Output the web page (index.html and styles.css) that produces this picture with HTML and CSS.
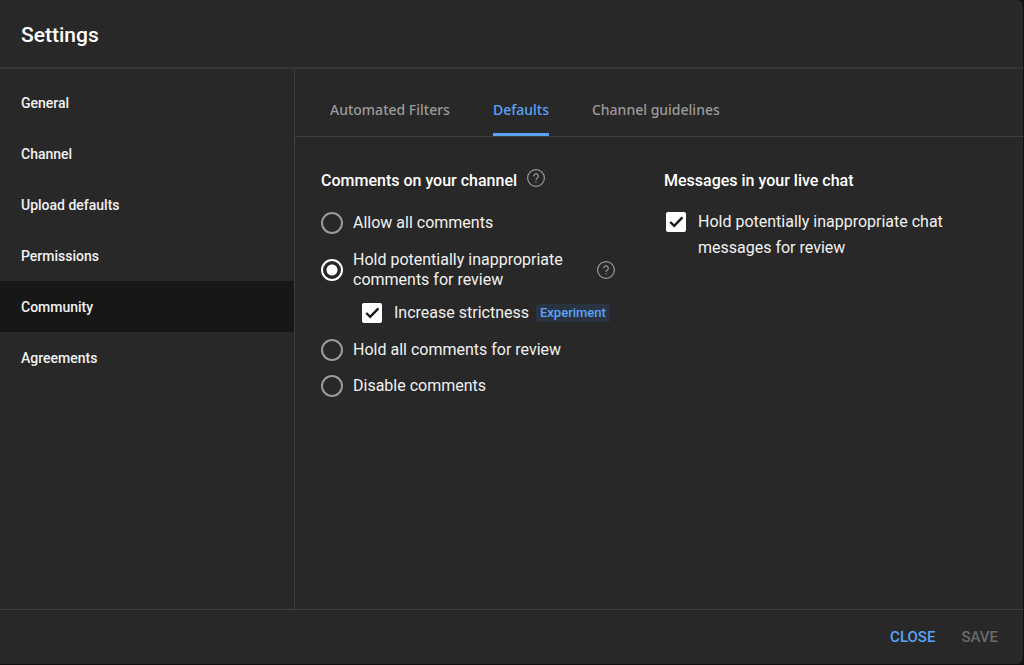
FILE: index.html
```html
<!DOCTYPE html>
<html lang="en">
<head>
<meta charset="utf-8">
<meta name="viewport" content="width=device-width, initial-scale=1">
<title>Settings</title>
<link rel="stylesheet" href="styles.css">
</head>
<body>
<div class="dialog" role="dialog" aria-labelledby="title">
  <header class="header"><h1 class="title" id="title">Settings</h1></header>
  <div class="body">
    <nav class="sidebar" aria-label="Settings sections">
      <a class="nav-item" href="#general">General</a>
      <a class="nav-item" href="#channel">Channel</a>
      <a class="nav-item" href="#uploads">Upload defaults</a>
      <a class="nav-item" href="#permissions">Permissions</a>
      <a class="nav-item nav-item-active" href="#community" aria-current="page">Community</a>
      <a class="nav-item" href="#agreements">Agreements</a>
    </nav>
    <main class="content">
      <div class="tabs" role="tablist">
        <button class="tab" type="button" role="tab" aria-selected="false">Automated Filters</button>
        <button class="tab tab-active" type="button" role="tab" aria-selected="true">Defaults</button>
        <button class="tab" type="button" role="tab" aria-selected="false">Channel guidelines</button>
      </div>
      <div class="panels">
        <section class="panel">
          <div class="heading-row">
            <h2 class="heading" id="comments">Comments on your channel</h2>
            <button class="help" type="button" aria-label="Help with comments">
              <svg class="help-icon" viewBox="0 0 18 18" aria-hidden="true"><circle cx="9" cy="9" r="8.4"/><path d="M6.7 7.2a2.3 2.3 0 1 1 3.7 1.8C9.5 9.6 9 10 9 11"/><path d="M9 12.3v1.3"/></svg>
            </button>
          </div>
          <div class="options" role="radiogroup" aria-labelledby="comments">
            <div class="option">
              <input class="radio" type="radio" name="mode" id="allow">
              <label class="option-label" for="allow">Allow all comments</label>
            </div>
            <div class="option option-tall">
              <input class="radio" type="radio" name="mode" id="hold" checked>
              <label class="option-label option-label-wrap" for="hold">Hold potentially inappropriate comments for review</label>
              <button class="help" type="button" aria-label="Help with held comments">
                <svg class="help-icon" viewBox="0 0 18 18" aria-hidden="true"><circle cx="9" cy="9" r="8.4"/><path d="M6.7 7.2a2.3 2.3 0 1 1 3.7 1.8C9.5 9.6 9 10 9 11"/><path d="M9 12.3v1.3"/></svg>
              </button>
            </div>
            <div class="option option-nested">
              <span class="check-box">
                <input class="check" type="checkbox" id="strict" checked>
                <svg class="check-mark" viewBox="0 0 20 20" aria-hidden="true"><path d="M4.2 10l4 3.8 8.2-8.4"/></svg>
              </span>
              <label class="option-label" for="strict">Increase strictness</label>
              <span class="badge">Experiment</span>
            </div>
            <div class="option">
              <input class="radio" type="radio" name="mode" id="hold-all">
              <label class="option-label" for="hold-all">Hold all comments for review</label>
            </div>
            <div class="option">
              <input class="radio" type="radio" name="mode" id="disable">
              <label class="option-label" for="disable">Disable comments</label>
            </div>
          </div>
        </section>
        <section class="panel">
          <div class="heading-row"><h2 class="heading">Messages in your live chat</h2></div>
          <div class="chat-option">
            <span class="check-box">
              <input class="check" type="checkbox" id="chat" checked>
              <svg class="check-mark" viewBox="0 0 20 20" aria-hidden="true"><path d="M4.2 10l4 3.8 8.2-8.4"/></svg>
            </span>
            <label class="chat-label" for="chat">Hold potentially inappropriate chat messages for review</label>
          </div>
        </section>
      </div>
    </main>
  </div>
  <footer class="footer">
    <button class="action" type="button">CLOSE</button>
    <button class="action" type="button" disabled>SAVE</button>
  </footer>
</div>
</body>
</html>
```
FILE: styles.css
```css
* { box-sizing: border-box; }

body {
  margin: 0;
  background: #111;
  color: #f1f1f1;
  font-family: Roboto, "Liberation Sans", sans-serif;
  font-size: 16px;
}

button {
  padding: 0;
  border: 0;
  background: none;
  font: inherit;
}

.dialog {
  display: flex;
  flex-direction: column;
  min-height: calc(100vh - 1px);
  margin: 0 1px 1px 0;
  border-radius: 0 6px 6px 0;
  background: #282828;
}

.header {
  padding: 21px 21px 18px;
  border-bottom: 2px solid #363636;
}

.title {
  margin: 0;
  color: #fff;
  font-size: 21px;
  font-weight: 500;
  line-height: 28px;
}

.body {
  display: grid;
  grid-template-columns: 295px 1fr;
  flex: 1;
}

.sidebar {
  padding-top: 8px;
  border-right: 1px solid #3f3f3f;
}

.nav-item {
  display: flex;
  align-items: center;
  height: 51px;
  padding-left: 21px;
  color: #f1f1f1;
  font-size: 14px;
  font-weight: 500;
  text-decoration: none;
}

.nav-item-active { background: #171717; }

.tabs {
  display: flex;
  gap: 43px;
  padding-left: 35px;
  border-bottom: 1px solid #3f3f3f;
}

.tab {
  height: 67px;
  padding-top: 18px;
  border-bottom: 4px solid transparent;
  color: #9b9b9b;
  font-family: "Noto Sans", sans-serif;
  font-size: 14px;
  font-weight: 500;
}

.tab-active {
  background: linear-gradient(#5ba3f8, #5ba3f8) bottom / 100% 3px no-repeat border-box;
  color: #5ba3f8;
}

.panels {
  display: grid;
  grid-template-columns: 343px 1fr;
  padding: 32px 26px;
}

.heading-row {
  display: flex;
  align-items: flex-start;
  gap: 10px;
  height: 24px;
}

.heading {
  margin: 0;
  color: #fff;
  font-size: 16px;
  font-weight: 500;
  line-height: 24px;
}

.help { display: flex; }

.help-icon {
  width: 18px;
  height: 18px;
  fill: none;
  stroke: #999;
  stroke-width: 1.2;
}

.options { padding-top: 12px; }

.option {
  display: flex;
  align-items: center;
  gap: 10px;
  height: 36px;
}

.option-tall { height: 57px; }

.option-nested {
  gap: 7px;
  height: 30px;
  margin-bottom: 4px;
  padding-left: 41px;
}

.option-nested .check-box { margin-right: 5px; }

.radio {
  appearance: none;
  flex: none;
  width: 22px;
  height: 22px;
  margin: 0;
  border: 2px solid #9a9a9a;
  border-radius: 50%;
}

.radio:checked {
  border-color: #fff;
  background: radial-gradient(circle, #fff 5px, transparent 6px);
}

.option-label { line-height: 20px; }
.option-label-wrap { width: 234px; }

.check-box {
  display: grid;
  flex: none;
}

.check,
.check-mark {
  grid-area: 1 / 1;
  width: 20px;
  height: 20px;
  margin: 0;
}

.check {
  appearance: none;
  border-radius: 2px;
  background: #fff;
}

.check-mark {
  fill: none;
  stroke: #181818;
  stroke-width: 2.4;
  pointer-events: none;
}

.badge {
  padding: 0 4px;
  border-radius: 2px;
  background: #293341;
  color: #5ba3f8;
  font-size: 13px;
  font-weight: 500;
  line-height: 18px;
}

.chat-option {
  display: flex;
  align-items: flex-start;
  gap: 12px;
  padding: 16px 0 0 2px;
}

.chat-option .check-box { padding-top: 3px; }

.chat-label {
  max-width: 260px;
  line-height: 26px;
}

.footer {
  display: flex;
  justify-content: flex-end;
  gap: 26px;
  padding: 18px 25px;
  border-top: 1px solid #3f3f3f;
}

.action {
  color: #5ba3f8;
  font-size: 15px;
  font-weight: 500;
  line-height: 18px;
}

.action:disabled { color: #6b6b6b; }
```
